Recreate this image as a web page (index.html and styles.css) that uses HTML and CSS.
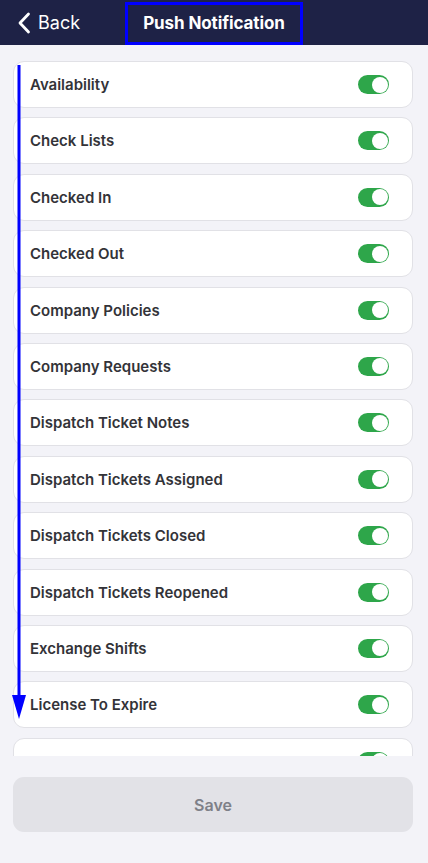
FILE: index.html
```html
<!DOCTYPE html>
<html>
<head>
<meta charset="utf-8">
<link rel="stylesheet" href="styles.css">
</head>
<body>
<div class="app">
  <header class="topbar">
    <div class="back">
      <svg class="chev" width="14" height="22" viewBox="0 0 14 22"><path d="M11.5 2 L3 11 L11.5 20" fill="none" stroke="#fff" stroke-width="2.8" stroke-linecap="round" stroke-linejoin="round"/></svg>
      <span>Back</span>
    </div>
    <div class="title">Push Notification</div>
  </header>
  <main class="list">
    <div class="row"><span>Availability</span><i class="toggle"></i></div>
    <div class="row"><span>Check Lists</span><i class="toggle"></i></div>
    <div class="row"><span>Checked In</span><i class="toggle"></i></div>
    <div class="row"><span>Checked Out</span><i class="toggle"></i></div>
    <div class="row"><span>Company Policies</span><i class="toggle"></i></div>
    <div class="row"><span>Company Requests</span><i class="toggle"></i></div>
    <div class="row"><span>Dispatch Ticket Notes</span><i class="toggle"></i></div>
    <div class="row"><span>Dispatch Tickets Assigned</span><i class="toggle"></i></div>
    <div class="row"><span>Dispatch Tickets Closed</span><i class="toggle"></i></div>
    <div class="row"><span>Dispatch Tickets Reopened</span><i class="toggle"></i></div>
    <div class="row"><span>Exchange Shifts</span><i class="toggle"></i></div>
    <div class="row"><span>License To Expire</span><i class="toggle"></i></div>
    <div class="row"><span>Messages</span><i class="toggle"></i></div>
    <svg class="arrow" width="16" height="660" viewBox="0 0 16 660"><rect x="5.5" y="0" width="3" height="640" fill="#0000ff"/><path d="M0 630 L14 630 L7 654 Z" fill="#0000ff"/></svg>
  </main>
  <footer class="footer">
    <button class="save">Save</button>
  </footer>
</div>
</body>
</html>
```

FILE: styles.css
```css
* { box-sizing: border-box; }
html, body { margin: 0; padding: 0; }
body {
  background: #f3f3f8;
  font-family: Inter, "Noto Sans", sans-serif;
  width: 428px;
  height: 863px;
  overflow: hidden;
}
.app { display: flex; flex-direction: column; height: 863px; }
.topbar {
  height: 45px;
  background: #1e2246;
  display: flex;
  align-items: center;
  color: #fff;
  flex-shrink: 0;
}
.back {
  display: flex;
  align-items: center;
  gap: 7px;
  margin-left: 17px;
  font-size: 18px;
  width: 108px;
}
.chev { display: block; }
.title {
  border: 3px solid #0000ff;
  height: 43px;
  margin-top: 1px;
  display: flex;
  align-items: center;
  justify-content: center;
  white-space: nowrap;
  font-weight: 700;
  font-size: 17px;
  letter-spacing: -0.1px;
  width: 178px;
}
.list {
  position: relative;
  height: 711px;
  overflow: hidden;
  padding: 16px 15px 0 13px;
  display: flex;
  flex-direction: column;
  gap: 9.4px;
  flex-shrink: 0;
}
.row {
  height: 47px;
  flex-shrink: 0;
  background: #fff;
  border: 1px solid #e1e1e6;
  border-radius: 11px;
  display: flex;
  align-items: center;
  justify-content: space-between;
  padding: 0 23px 0 16px;
  font-size: 15px;
  font-weight: 600;
  color: #333338;
}
.toggle {
  width: 31px;
  height: 19px;
  border-radius: 10px;
  background: #2ea64a;
  position: relative;
  display: block;
}
.toggle::after {
  content: "";
  position: absolute;
  right: 1.5px;
  top: 1.5px;
  width: 16px;
  height: 16px;
  border-radius: 50%;
  background: #fff;
}
.arrow {
  position: absolute;
  left: 12px;
  top: 20px;
}
.footer {
  flex: 1;
  padding: 21px 15px 0 13px;
}
.save {
  width: 100%;
  height: 55px;
  border: none;
  border-radius: 11px;
  background: #e2e2e7;
  color: #7e8088;
  font-family: Inter, "Noto Sans", sans-serif;
  font-size: 16px;
  font-weight: 600;
}
```
